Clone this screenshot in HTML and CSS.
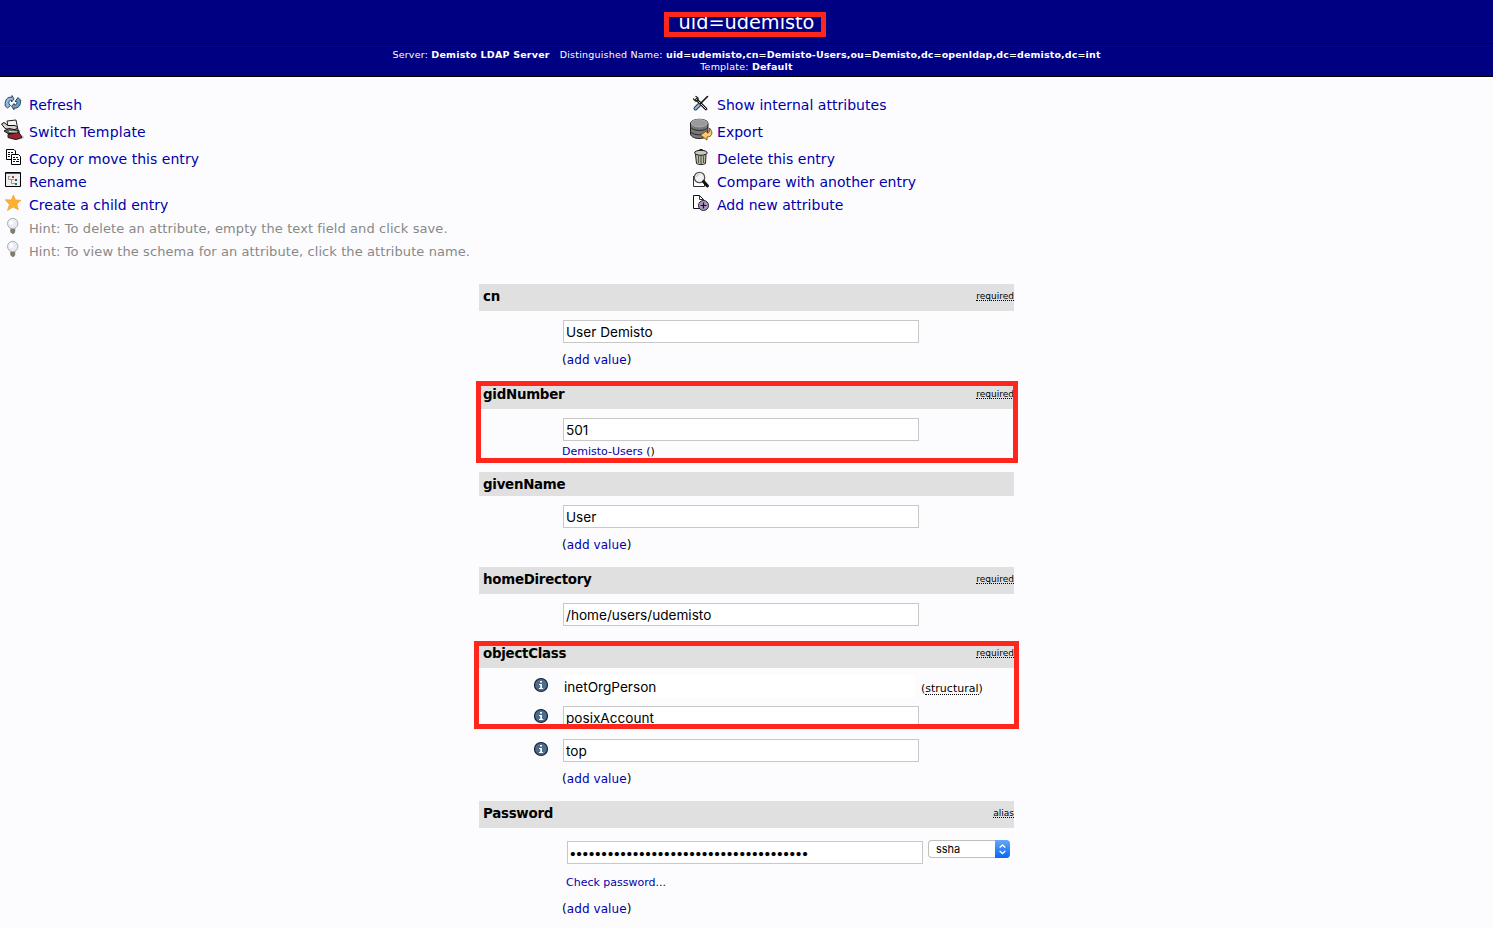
FILE: index.html
```html
<!DOCTYPE html>
<html lang="en">
<head>
<meta charset="utf-8">
<title>uid=udemisto</title>
<link rel="stylesheet" href="styles.css">
</head>
<body>
<header>
  <h1><span class="title">uid=udemisto</span><i class="mark mark-title"></i></h1>
  <div class="sub">
    <div class="subline"><span>Server: <b>Demisto LDAP Server</b></span><span>Distinguished Name: <b class="dn">uid=udemisto,cn=Demisto-Users,ou=Demisto,dc=openldap,dc=demisto,dc=int</b></span></div>
    <div class="subline2">Template: <b>Default</b></div>
  </div>
</header>

<nav class="menu">
  <ul class="col">
    <li><svg class="ic" viewBox="0 0 24 24"><g stroke="#26384c" stroke-width=".9" stroke-linejoin="round"><path d="M5.300 14.500C4.500 9 7.500 5.500 12 6.200V4.500L14 8L11.500 11V9.200C9.500 9 8.500 10.500 9 13L10.500 14.500L7.500 17L4.800 14.500Z" fill="#8fbbe3"/><path d="M20.300 9.500C21.500 14 18 17.800 14 17.200V18.800L11.500 15.300L14 12.500V13.800C16.500 14 17.500 12.500 16.800 10.500H15L18 6.500L21 9.500Z" fill="#6b9dca"/></g></svg><a>Refresh</a></li>
    <li class="tall"><svg class="ic" viewBox="0 0 24 24"><ellipse cx="16" cy="19" rx="8" ry="3" fill="#999" opacity=".5"/><path d="M7 3L16 2L18 12L17 16L9 15Z" fill="#f5f5f3" stroke="#222"/><path d="M1.500 6L4 4.500L8 7.500H15L18 10L13 12.500L5 10.500Z" fill="#d5d5d3" stroke="#111"/><path d="M4 13L9 10.500L19 12.500V16L8 15.500Z" fill="#666" stroke="#111"/><path d="M8 16.500L19 14.500L22 19.500L16 21.500L8 19.500Z" fill="#9b2431" stroke="#291317"/><path d="M9 13.500L17 14" stroke="#ddd"/></svg><a class="wide">Switch Template</a></li>
    <li><svg class="ic" viewBox="0 0 24 24"><g fill="#fff" stroke="#000"><path d="M6.500 4.500H14L15.500 6V14.500H6.500Z"/><path d="M11.500 9.500H18.500L20.500 11.500V19.500H11.500Z"/></g><path d="M8 7.500H10M11 7.500H13M8 9.500H10M8 11.500H10M13 12.500H15M16 12.500H18M13 14.500H16M17 14.500H19M13 16.500H15M16 16.500H19" stroke="#111"/></svg><a>Copy or move this entry</a></li>
    <li><svg class="ic" viewBox="0 0 24 24"><path d="M5.500 4.500H20.500V18.500H5.500Z" fill="#eee" stroke="#000"/><path d="M6 5.500H20" stroke="#345f88"/><path d="M8.500 9V11.500H14M11.500 11.500V15.500H15M8 8.500H10" fill="none" stroke="#999"/><path d="M12 8H14V10H12Z" fill="#c33"/><path d="M15 11H17V13H15Z" fill="#357"/><path d="M15 15H17V17H15Z" fill="#275"/></svg><a>Rename</a></li>
    <li><svg class="ic" viewBox="0 0 24 24"><path d="M13.400 4L15.500 9L21 9.300L16.800 13L18.300 18.800L13.200 16L7.500 19.500L9.400 13.500L5.300 8.700L11.300 9Z" fill="#ffb02d" stroke="#e9a03a" stroke-width=".7"/></svg><a>Create a child entry</a></li>
    <li class="hint"><svg class="ic" viewBox="0 0 24 24"><path d="M10 13L10.800 16H14.700L15.500 13Z" fill="#f2e3b7" stroke="#b9ad8d" stroke-width=".6"/><circle cx="12.700" cy="9.500" r="5.200" fill="#e7ecf3" stroke="#989da5" stroke-width=".8"/><path d="M10.700 15.500H14.800V18L13.700 19.500H12L10.700 18Z" fill="#857d69" stroke="#555" stroke-width=".5"/><circle cx="11.200" cy="8.500" r="2.300" fill="#fff"/></svg><span>Hint: To delete an attribute, empty the text field and click save.</span></li>
    <li class="hint"><svg class="ic" viewBox="0 0 24 24"><path d="M10 13L10.800 16H14.700L15.500 13Z" fill="#f2e3b7" stroke="#b9ad8d" stroke-width=".6"/><circle cx="12.700" cy="9.500" r="5.200" fill="#e7ecf3" stroke="#989da5" stroke-width=".8"/><path d="M10.700 15.500H14.800V18L13.700 19.500H12L10.700 18Z" fill="#857d69" stroke="#555" stroke-width=".5"/><circle cx="11.200" cy="8.500" r="2.300" fill="#fff"/></svg><span>Hint: To view the schema for an attribute, click the attribute name.</span></li>
  </ul>
  <ul class="col">
    <li><svg class="ic" viewBox="0 0 24 24"><g fill="none" stroke-linecap="round"><path d="M8.500 8.500L18 18" stroke="#111" stroke-width="2.800"/><path d="M8.500 8.500L18 18" stroke="#ddd" stroke-width="1"/><path d="M5.500 8L7.500 10H10V7L8 5.500" stroke="#222" stroke-width="1.300"/><path d="M19.500 5.500L12.500 12.500" stroke="#111" stroke-width="1.600"/><path d="M11 14L7.500 17.500" stroke="#26384b" stroke-width="4"/><path d="M10.800 14.200L7.500 17.500" stroke="#91b4d1" stroke-width="2.200"/></g></svg><a>Show internal attributes</a></li>
    <li class="tall"><svg class="ic shift" viewBox="0 0 24 24"><path d="M1.500 5V16C2 19 6 20.500 10 20.500C15 20.500 18.500 19 19 16V5C18 0 3 0 1.500 5Z" fill="#777" stroke="#222"/><ellipse cx="10.300" cy="5.200" rx="8" ry="3.700" fill="#9a9a9a" stroke="#bbb" stroke-width=".7"/><path d="M1.500 9.500C6 13.500 15 13.500 19 9.500M1.500 14C6 18 15 17.500 19 13.500" fill="none" stroke="#292929"/><path d="M20.500 10C25 15 22.500 19 18 19V22L11.500 17L18 12.500V15C20.500 15 21 13 20.500 10Z" fill="#ffc96d" stroke="#593b12" stroke-width=".8"/></svg><a>Export</a></li>
    <li><svg class="ic" viewBox="0 0 24 24"><path d="M7.500 9.500H18L17.500 18.500C15 20 10.500 20 8.500 18.500Z" fill="#c3c3b1" stroke="#222"/><path d="M10.500 11V18M13 11V19M15.500 11V18" stroke="#56564c" stroke-width="1.200"/><ellipse cx="12.900" cy="7.800" rx="6.300" ry="2.500" fill="#c9c9be" stroke="#111"/><path d="M10.500 5.500Q13 3 15.500 5.500" fill="none" stroke="#111"/></svg><a>Delete this entry</a></li>
    <li><svg class="ic" viewBox="0 0 24 24"><path d="M5.500 8V18.500H16.500V8" fill="#fff" stroke="#333"/><circle cx="11.500" cy="9.500" r="5.200" fill="#f0f3f4" stroke="#555" stroke-width="1.300"/><path d="M15.500 13.500L19.500 18" stroke="#111" stroke-width="3" stroke-linecap="round"/><path d="M8.500 9Q9 6.500 11.500 6.500" fill="none" stroke="#bbb"/></svg><a>Compare with another entry</a></li>
    <li><svg class="ic" viewBox="0 0 24 24"><path d="M5.500 4.500H11.500L15.500 8.500V17.500H5.500Z" fill="#fff" stroke="#111"/><path d="M11.500 4.500V8.500H15.500" fill="none" stroke="#333"/><circle cx="15.500" cy="14.500" r="5" fill="#a797bd" stroke="#262130"/><path d="M12.500 14.500H18.500M15.500 11.500V17.500" stroke="#111" stroke-width="1.200"/></svg><a>Add new attribute</a></li>
  </ul>
</nav>

<main>
  <section>
    <h2><span>cn</span><abbr>required</abbr></h2>
    <div class="field">User Demisto</div>
    <p class="add">(<a>add value</a>)</p>
  </section>
  <section class="s-gid">
    <h2><span>gidNumber</span><abbr>required</abbr></h2>
    <div class="field">501</div>
    <p class="group"><a>Demisto-Users</a> ()</p>
    <i class="mark mark-gid"></i>
  </section>
  <section class="s-given">
    <h2 class="short"><span>givenName</span></h2>
    <div class="field">User</div>
    <p class="add">(<a>add value</a>)</p>
  </section>
  <section class="s-home">
    <h2><span>homeDirectory</span><abbr>required</abbr></h2>
    <div class="field">/home/users/udemisto</div>
  </section>
  <section class="s-object">
    <h2><span>objectClass</span><abbr>required</abbr></h2>
    <div class="row r1"><svg class="info" viewBox="0 0 16 16"><circle cx="8" cy="8" r="6.500" fill="#4b6d8e" stroke="#17212c" stroke-width="1.200"/><path d="M7 4H9V5.500H7ZM6 7H9V11H10.200V12H6V11H7.200V8H6Z" fill="#fff"/></svg><div class="field plain">inetOrgPerson</div><span class="struct">(<abbr>structural</abbr>)</span></div>
    <div class="row r2"><svg class="info" viewBox="0 0 16 16"><circle cx="8" cy="8" r="6.500" fill="#4b6d8e" stroke="#17212c" stroke-width="1.200"/><path d="M7 4H9V5.500H7ZM6 7H9V11H10.200V12H6V11H7.200V8H6Z" fill="#fff"/></svg><div class="field">posixAccount</div></div>
    <div class="row r3"><svg class="info" viewBox="0 0 16 16"><circle cx="8" cy="8" r="6.500" fill="#4b6d8e" stroke="#17212c" stroke-width="1.200"/><path d="M7 4H9V5.500H7ZM6 7H9V11H10.200V12H6V11H7.200V8H6Z" fill="#fff"/></svg><div class="field">top</div></div>
    <p class="add">(<a>add value</a>)</p>
    <i class="mark mark-object"></i>
  </section>
  <section class="s-pass">
    <h2><span>Password</span><abbr class="alias">alias</abbr></h2>
    <div class="passrow">
      <div class="field dots">••••••••••••••••••••••••••••••••••••••</div>
      <div class="select"><span>ssha</span><svg viewBox="0 0 15 18"><defs><linearGradient id="b" x2="0" y2="1"><stop stop-color="#62a9f9"/><stop offset="1" stop-color="#0967f4"/></linearGradient></defs><path d="M0 0H11Q15 0 15 4V14Q15 18 11 18H0Z" fill="url(#b)"/><path d="M4.700 7.500L7.500 5L10.300 7.500M4.700 11L7.500 13.500L10.300 11" fill="none" stroke="#fff" stroke-width="1.400"/></svg></div>
    </div>
    <p class="check"><a>Check password...</a></p>
    <p class="add">(<a>add value</a>)</p>
  </section>
</main>
</body>
</html>
```
FILE: styles.css
```css
* { box-sizing: border-box; }
html, body, h1, h2, p, ul { margin: 0; padding: 0; }
body {
  height: 928px; overflow: hidden; background: #fcfcfe; color: #000;
  font-family: "DejaVu Sans", Verdana, sans-serif; font-size: 12px;
}
a { color: #0000aa; }
header { height: 77px; background: #000082; color: #fff; border-bottom: 1px solid #000; }
h1 { position: relative; height: 44px; border-bottom: 1px solid #000; text-align: center; font-size: 19.3px; font-weight: 400; line-height: 46px; }
.sub { padding-top: 5px; font-size: 9.5px; letter-spacing: .21px; line-height: 12px; }
.sub .dn { letter-spacing: .13px; }
.subline { display: flex; justify-content: center; gap: 10px; white-space: nowrap; }
.subline2 { text-align: center; }
.mark { position: absolute; border: 5px solid #ff261e; }
.mark-title { left: 664px; top: 12px; width: 162px; height: 25px; }

.menu { display: grid; grid-template-columns: 688px 1fr; padding-top: 16px; height: 207px; }
.col { list-style: none; }
.col li { display: flex; align-items: center; height: 23px; gap: 5px; font-size: 14px; letter-spacing: .03px; white-space: nowrap; }
.col li.tall { height: 31px; }
.col li.hint { font-size: 13px; letter-spacing: .085px; color: #888; }
.wide { letter-spacing: .15px; }
.hint span { padding-top: 1px; }
.ic { width: 24px; height: 24px; flex: none; margin-top: -3px; }
.ic.shift { margin-left: 1px; margin-right: -1px; }

main { width: 535px; margin-left: 479px; }
section { position: relative; }
h2 { display: flex; justify-content: space-between; height: 27px; padding-left: 4px; background: #e0e0e0; font-size: 13.4px; letter-spacing: -.27px; line-height: 25px; }
h2.short { height: 24px; }
h2 abbr { font-size: 9px; letter-spacing: 0; font-weight: 400; line-height: 10px; height: 10px; margin-top: 7px; }
abbr { border-bottom: 1px dotted #000; }
.field { width: 356px; height: 23px; margin: 9px 0 0 84px; padding-left: 2px; border: 1px solid #c8c8c8; background: #fff; font-family: Inter, sans-serif; font-size: 13.6px; line-height: 22px; white-space: nowrap; }
.add { margin: 8px 0 0 83px; font-size: 12px; letter-spacing: .08px; line-height: 18px; }
.s-gid { margin-top: 13px; }
.group { margin: 3px 0 0 83px; padding-top: 1px; height: 14px; font-size: 11px; line-height: 14px; }
.mark-gid { left: -3px; top: -1px; width: 542px; height: 82px; }
.s-given { margin-top: 14px; }
.s-home { margin-top: 13px; }
.s-object { margin-top: 15px; }
.mark-object { left: -5px; top: 0; width: 545px; height: 88px; }
.row { display: flex; align-items: center; height: 23px; padding-left: 54px; }
.row .field { margin: 0 0 0 14px; }
.row .field.plain { width: 352px; border: 0; padding-left: 1px; line-height: 24px; }
.info { width: 16px; height: 16px; margin-top: -3px; }
.r1 { margin-top: 7px; }
.r2 { margin-top: 8px; }
.r3 { margin-top: 10px; }
.struct { margin-left: 6px; padding-top: 4px; font-size: 11px; }
.struct abbr { display: inline-block; line-height: 11px; }
.s-pass { margin-top: 13px; }
.passrow { display: flex; padding: 12px 0 0 88px; }
.passrow .field { margin: 1px 5px 0 0; }
.field.dots { padding-left: 1px; font-size: 13.5px; letter-spacing: -1.32px; }
.select { display: flex; justify-content: space-between; width: 82px; height: 18px; padding-left: 7px; border: 1px solid #c0c0c0; border-right: 0; border-radius: 4px; background: #fff; font: 11px/17px Inter, sans-serif; }
.select svg { width: 15px; height: 18px; margin-top: -1px; }
.check { margin: 12px 0 0 87px; font-size: 11px; line-height: 14px; }
.s-pass .add { margin-top: 10px; }
```
